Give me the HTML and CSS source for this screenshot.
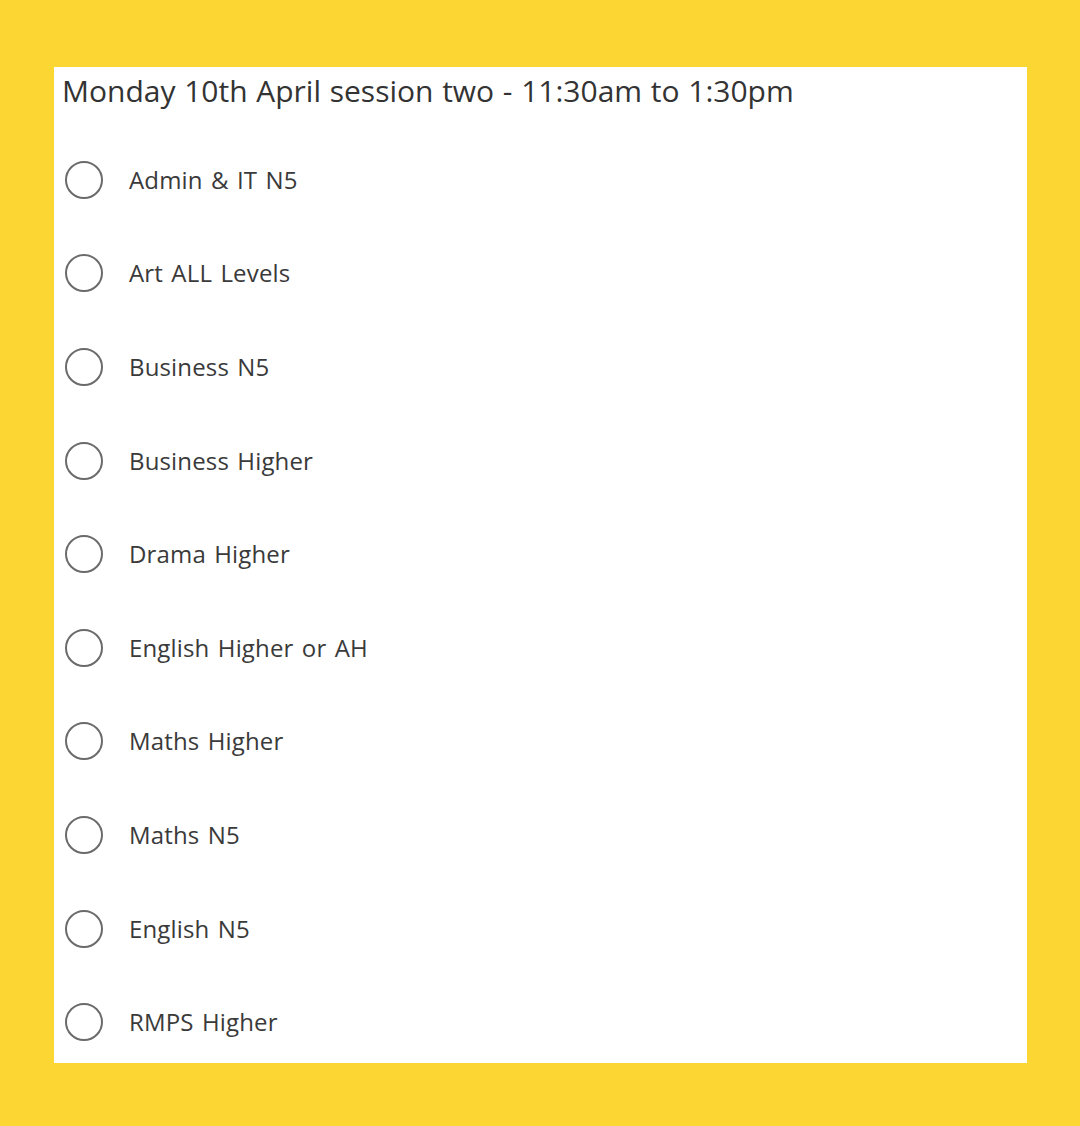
FILE: index.html
```html
<!DOCTYPE html>
<html>
<head>
<meta charset="utf-8">
<link rel="stylesheet" href="styles.css">
</head>
<body>
<div class="panel">
  <div class="title">Monday 10th April session two - 11:30am to 1:30pm</div>
  <ul class="options">
    <li class="option"><span class="radio"></span><span class="label">Admin &amp; IT N5</span></li>
    <li class="option"><span class="radio"></span><span class="label">Art ALL Levels</span></li>
    <li class="option"><span class="radio"></span><span class="label">Business N5</span></li>
    <li class="option"><span class="radio"></span><span class="label">Business Higher</span></li>
    <li class="option"><span class="radio"></span><span class="label">Drama Higher</span></li>
    <li class="option"><span class="radio"></span><span class="label">English Higher or AH</span></li>
    <li class="option"><span class="radio"></span><span class="label">Maths Higher</span></li>
    <li class="option"><span class="radio"></span><span class="label">Maths N5</span></li>
    <li class="option"><span class="radio"></span><span class="label">English N5</span></li>
    <li class="option"><span class="radio"></span><span class="label">RMPS Higher</span></li>
  </ul>
</div>
</body>
</html>
```
FILE: styles.css
```css
html, body {
  margin: 0;
  padding: 0;
}
body {
  background: #fcd734;
  width: 1080px;
  height: 1126px;
  overflow: hidden;
  font-family: "Open Sans", "Noto Sans", sans-serif;
}
.panel {
  margin: 67px 0 0 54px;
  width: 973px;
  height: 996px;
  background: #ffffff;
  box-sizing: border-box;
}
.title {
  height: 66px;
  box-sizing: border-box;
  padding: 4px 0 0 8px;
  font-size: 30px;
  line-height: 40px;
  word-spacing: 0.9px;
  color: #333333;
}
.options {
  list-style: none;
  margin: 0;
  padding: 0;
}
.option {
  height: 93.6px;
  display: flex;
  align-items: center;
  padding-left: 11px;
  box-sizing: border-box;
}
.radio {
  width: 38px;
  height: 38px;
  border: 2px solid #6b6b6b;
  border-radius: 50%;
  box-sizing: border-box;
  flex: none;
}
.label {
  margin-left: 26px;
  font-size: 24px;
  letter-spacing: 0.15px;
  word-spacing: 2px;
  color: #3a3a3a;
  line-height: 30px;
}
```
